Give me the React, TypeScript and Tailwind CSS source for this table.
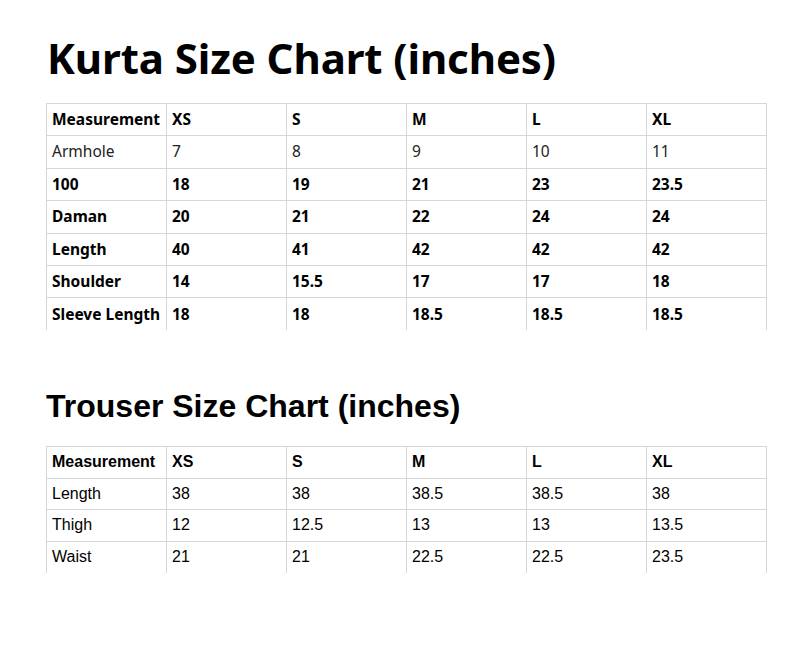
const sizes = ["XS", "S", "M", "L", "XL"];

const kurta: { label: string; values: string[]; bold: boolean }[] = [
  { label: "Armhole", values: ["7", "8", "9", "10", "11"], bold: false },
  { label: "100", values: ["18", "19", "21", "23", "23.5"], bold: true },
  { label: "Daman", values: ["20", "21", "22", "24", "24"], bold: true },
  { label: "Length", values: ["40", "41", "42", "42", "42"], bold: true },
  { label: "Shoulder", values: ["14", "15.5", "17", "17", "18"], bold: true },
  { label: "Sleeve Length", values: ["18", "18", "18.5", "18.5", "18.5"], bold: true },
];

const trouser: { label: string; values: string[] }[] = [
  { label: "Length", values: ["38", "38", "38.5", "38.5", "38"] },
  { label: "Thigh", values: ["12", "12.5", "13", "13", "13.5"] },
  { label: "Waist", values: ["21", "21", "22.5", "22.5", "23.5"] },
];

function KurtaTable() {
  const cell = "border border-[#d6d6d6] border-b-0 px-[5px] h-[32.4px] w-[120px] align-middle text-left whitespace-nowrap";
  return (
    <table className="table-fixed border-collapse w-[720px] text-[15.5px] text-black font-['Noto_Sans',sans-serif]">
      <tbody>
        <tr className="font-bold">
          <td className={cell}>Measurement</td>
          {sizes.map((s) => <td key={s} className={cell}>{s}</td>)}
        </tr>
        {kurta.map((r) => (
          <tr key={r.label} className={r.bold ? "font-bold" : "font-normal text-[#222]"}>
            <td className={cell}>{r.label}</td>
            {r.values.map((v, i) => <td key={i} className={cell}>{v}</td>)}
          </tr>
        ))}
      </tbody>
    </table>
  );
}

function TrouserTable() {
  const cell = "border border-[#d6d6d6] border-b-0 px-[5px] h-[31.5px] w-[120px] align-middle text-left whitespace-nowrap";
  return (
    <table className="table-fixed border-collapse w-[720px] text-[16px] text-black font-['Liberation_Sans',Arial,sans-serif]">
      <tbody>
        <tr className="font-bold">
          <td className={cell}>Measurement</td>
          {sizes.map((s) => <td key={s} className={cell}>{s}</td>)}
        </tr>
        {trouser.map((r) => (
          <tr key={r.label}>
            <td className={cell}>{r.label}</td>
            {r.values.map((v, i) => <td key={i} className={cell}>{v}</td>)}
          </tr>
        ))}
      </tbody>
    </table>
  );
}

export default function App() {
  return (
    <div className="w-[804px] h-[658px] bg-white pl-[46px] pt-[30px]">
      <h1 className="text-[42px] leading-[56px] font-bold text-black pl-[1px] tracking-[-0.1px] font-['Noto_Sans',sans-serif]">
        Kurta Size Chart (inches)
      </h1>
      <div className="mt-[17px]">
        <KurtaTable />
      </div>
      <h2 className="mt-[56px] text-[32px] leading-[40px] font-bold text-black font-['Liberation_Sans',Arial,sans-serif]">
        Trouser Size Chart (inches)
      </h2>
      <div className="mt-[20px]">
        <TrouserTable />
      </div>
    </div>
  );
}
